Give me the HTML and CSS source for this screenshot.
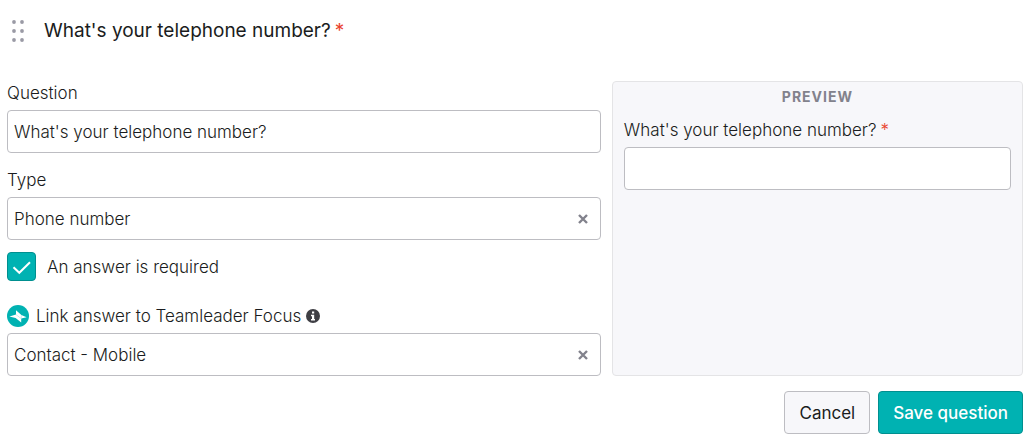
FILE: index.html
```html
<!DOCTYPE html>
<html lang="en">
<head>
    <meta charset="UTF-8">
    <meta name="viewport" content="width=device-width, initial-scale=1.0">
    <title>Edit question</title>
    <link rel="stylesheet" href="styles.css">
</head>
<body>

<form class="question">
    <header class="question-header">
        <svg class="drag-handle" width="12" height="22" viewBox="0 0 12 22" fill="#9a9aa5">
            <circle cx="2" cy="2" r="1.9"/>
            <circle cx="10" cy="2" r="1.9"/>
            <circle cx="2" cy="11" r="1.9"/>
            <circle cx="10" cy="11" r="1.9"/>
            <circle cx="2" cy="20" r="1.9"/>
            <circle cx="10" cy="20" r="1.9"/>
        </svg>
        <h1>What's your telephone number?<span class="required">*</span></h1>
    </header>

    <div class="question-body">
        <div class="settings">
            <div class="field">
                <label class="label" for="question">Question</label>
                <input class="control" type="text" id="question" value="What's your telephone number?">
            </div>

            <div class="field">
                <label class="label" for="type">Type</label>
                <div class="select">
                    <select class="control" id="type">
                        <option>Phone number</option>
                    </select>
                    <button class="clear" type="button" aria-label="Clear type">
                        <svg width="10" height="10" viewBox="0 0 10 10" stroke="#82828c" stroke-width="2.4"><path d="M1 1l8 8M9 1l-8 8"/></svg>
                    </button>
                </div>
            </div>

            <label class="checkbox">
                <input type="checkbox" checked>
                <svg class="tick" width="29" height="29" viewBox="0 0 29 29" fill="none" stroke="#fff" stroke-width="2"><path d="M6.5 15.2l5.8 5.6L23 10.2"/></svg>
                An answer is required
            </label>

            <div class="field">
                <div class="label-row">
                    <svg width="22" height="22" viewBox="0 0 22 22">
                        <circle cx="11" cy="11" r="11" fill="#00b2b2"/>
                        <path d="M2.4 11.6L9 9.6V5.2l5.4 4.8 5.2 2.2-5.4 1.4v3.8L8.6 13z" fill="#fff"/>
                        <path d="M9 9.6l5.2 4 .2-3.6" fill="none" stroke="#a6e2e2" stroke-width=".6"/>
                    </svg>
                    <label class="label" for="link">Link answer to Teamleader Focus</label>
                    <svg class="info" width="14" height="14" viewBox="0 0 14 14">
                        <circle cx="7" cy="7" r="7" fill="#3f3f44"/>
                        <path d="M6 2.4h2.2v2.2H6zM5 5.8h3.2v4.3H9v1.5H5v-1.5h1V7.3H5z" fill="#fff"/>
                    </svg>
                </div>
                <div class="select">
                    <select class="control" id="link">
                        <option>Contact - Mobile</option>
                    </select>
                    <button class="clear" type="button" aria-label="Clear link">
                        <svg width="10" height="10" viewBox="0 0 10 10" stroke="#82828c" stroke-width="2.4"><path d="M1 1l8 8M9 1l-8 8"/></svg>
                    </button>
                </div>
            </div>
        </div>

        <section class="preview">
            <h2>PREVIEW</h2>
            <label class="label" for="answer">What's your telephone number?<span class="required">*</span></label>
            <input class="control" type="tel" id="answer">
        </section>
    </div>

    <footer class="actions">
        <button class="button" type="button">Cancel</button>
        <button class="button primary" type="submit">Save question</button>
    </footer>
</form>

</body>
</html>
```
FILE: styles.css
```css
* {
    box-sizing: border-box;
}

body {
    margin: 0;
    background-color: #fff;
    color: #1a1c20;
    font-family: Inter, sans-serif;
    font-size: 17px;
    font-weight: 300;
    line-height: 24px;
}

.question {
    padding: 19px 9px 5px 7px;
}

.question-header {
    display: flex;
    align-items: center;
    gap: 20px;
    padding-left: 5px;
    margin-bottom: 38px;
}

h1 {
    margin: 0;
    font-size: 19px;
    font-weight: 400;
}

.required {
    margin-left: 4px;
    color: #e9442d;
}

.question-body {
    display: grid;
    grid-template-columns: 13fr 9fr;
    gap: 11px;
}

.field + .field {
    margin-top: 15px;
}

.label {
    display: block;
}

.control {
    display: block;
    width: 100%;
    height: 43px;
    margin: 5px 0 0;
    padding: 0 6px;
    border: 1px solid #bdbdc2;
    border-radius: 4px;
    background-color: #fff;
    color: inherit;
    font: inherit;
    appearance: none;
}

.select {
    position: relative;
}

.clear {
    position: absolute;
    top: 0;
    right: 0;
    display: flex;
    align-items: center;
    height: 100%;
    padding: 0 13px;
    border: 0;
    background: none;
    cursor: pointer;
}

.checkbox {
    display: grid;
    grid-template-columns: 29px 1fr;
    align-items: center;
    column-gap: 11px;
    margin: 12px 0 23px;
}

.checkbox input {
    grid-area: 1 / 1;
    width: 29px;
    height: 29px;
    margin: 0;
    border: 1px solid #bdbdc2;
    border-radius: 4px;
    appearance: none;
}

.checkbox input:checked {
    border-color: #008f8f;
    background-color: #00b2b2;
}

.tick {
    grid-area: 1 / 1;
    pointer-events: none;
}

.checkbox input:not(:checked) + .tick {
    visibility: hidden;
}

.label-row {
    display: flex;
    align-items: center;
    gap: 7px;
}

.info {
    margin-left: -2px;
}

.preview {
    padding: 4px 11px;
    border: 1px solid #e4e4e6;
    border-radius: 4px;
    background-color: #f7f7fa;
}

h2 {
    margin: 0 0 10px;
    color: #82828c;
    font-size: 14px;
    font-weight: 700;
    line-height: 22px;
    letter-spacing: 1px;
    text-align: center;
}

.actions {
    display: flex;
    justify-content: flex-end;
    gap: 8px;
    margin-top: 15px;
}

.button {
    height: 43px;
    padding: 0 14px;
    border: 1px solid #bdbdc2;
    border-radius: 4px;
    background-color: #f7f7fa;
    color: inherit;
    font: inherit;
    font-weight: 400;
    cursor: pointer;
}

.primary {
    border-color: #008f8f;
    background-color: #00b2b2;
    color: #fff;
    font-weight: 500;
}
```
